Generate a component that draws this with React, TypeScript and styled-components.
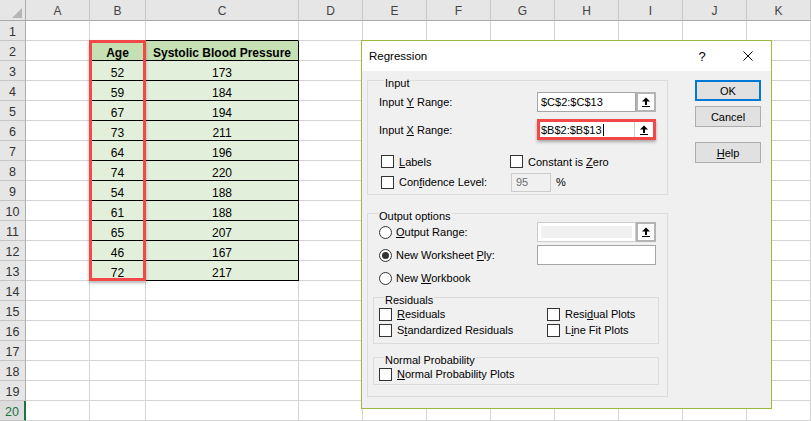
import React from 'react'
import styled, { createGlobalStyle } from 'styled-components'

const GlobalStyle = createGlobalStyle`
  html, body {
    margin: 0;
    padding: 0;
    background: #fff;
    overflow: hidden;
  }
`

const SHEET_FONT = `"Liberation Sans", Arial, sans-serif`
const UI_FONT = `"Liberation Sans", Arial, sans-serif`

/* ------------------------- SHEET ------------------------- */

const Sheet = styled.div`
  position: relative;
  width: 811px;
  height: 421px;
  overflow: hidden;
  display: grid;
  grid-template-columns: 26px 64px 56px 153px repeat(8, 64px);
  grid-template-rows: 21px repeat(20, 20px);
  font-family: ${SHEET_FONT};
`

const Corner = styled.div`
  box-sizing: border-box;
  background: #e6e6e6;
  border-right: 1px solid #ababab;
  border-bottom: 1px solid #ababab;
  display: flex;
  align-items: flex-end;
  justify-content: flex-end;
  padding: 0 3px 2px 0;
`

const ColHead = styled.div`
  box-sizing: border-box;
  background: #e6e6e6;
  border-right: 1px solid #c6c6c6;
  border-bottom: 1px solid #ababab;
  display: flex;
  align-items: center;
  justify-content: center;
  padding-top: 2px;
  font-size: 12px;
  color: #444;
`

const RowHead = styled.div<{ $active?: boolean }>`
  box-sizing: border-box;
  background: ${p => (p.$active ? '#dcdcdc' : '#e6e6e6')};
  border-right: ${p => (p.$active ? '2px solid #217346' : '1px solid #ababab')};
  border-bottom: 1px solid #c6c6c6;
  display: flex;
  align-items: center;
  justify-content: center;
  padding-top: 2px;
  font-size: 12.5px;
  color: ${p => (p.$active ? '#217346' : '#333')};
`

const Cell = styled.div<{ $fill?: string; $bold?: boolean; $rightLine?: string; $bottomLine?: string }>`
  box-sizing: border-box;
  display: flex;
  align-items: flex-end;
  justify-content: center;
  background: ${p => p.$fill ?? '#fff'};
  border-right: 1px solid ${p => p.$rightLine ?? '#d4d4d4'};
  border-bottom: 1px solid ${p => p.$bottomLine ?? '#d4d4d4'};
  font-weight: ${p => (p.$bold ? 700 : 400)};
  font-size: 12px;
  line-height: 14px;
  color: #000;
  white-space: nowrap;
  overflow: hidden;
`

const Highlight = styled.div`
  position: absolute;
  left: 89px;
  top: 40px;
  width: 57px;
  height: 241px;
  box-sizing: border-box;
  border: 3px solid #f24848;
  box-shadow: 0 2px 3px rgba(0, 0, 0, 0.3);
  pointer-events: none;
`

/* ------------------------- DIALOG ------------------------- */

const Dialog = styled.div`
  position: absolute;
  left: 361px;
  top: 40px;
  width: 411px;
  height: 369px;
  box-sizing: border-box;
  border: 1px solid #9cba3c;
  display: flex;
  flex-direction: column;
  font-family: ${UI_FONT};
  font-size: 11px;
  color: #000;
`

const TitleBar = styled.div`
  height: 30px;
  flex: none;
  background: #fff;
  display: flex;
  align-items: center;
  padding-left: 7px;
`

const Title = styled.div`
  flex: 1;
  font-size: 11.5px;
`

const Caption = styled.div`
  width: 46px;
  height: 30px;
  display: flex;
  align-items: center;
  justify-content: center;
  font-size: 13px;
`

const Body = styled.div`
  flex: 1;
  background: #f0f0f0;
  display: flex;
  gap: 27px;
  padding: 1px 10px 11px 5px;
`

const LeftCol = styled.div`
  width: 301px;
  display: flex;
  flex-direction: column;
`

const Group = styled.fieldset<{ $pad: string; $gap?: number }>`
  margin: ${p => (p.$gap ? `${p.$gap}px 0 0` : 0)};
  padding: ${p => p.$pad};
  border: 1px solid #dcdcdc;
  min-width: 0;
  box-sizing: border-box;
`

const Legend = styled.legend`
  padding: 5px 1px 0;
  margin-left: 5px;
  line-height: 12px;
  font-size: 11px;
`

const Row = styled.div<{ $h: number; $gap?: number; $indent?: number }>`
  height: ${p => p.$h}px;
  margin-top: ${p => p.$gap ?? 0}px;
  padding-left: ${p => p.$indent ?? 0}px;
  display: flex;
  align-items: center;
`

const FieldLabel = styled.div<{ $w: number }>`
  width: ${p => p.$w}px;
  flex: none;
  display: flex;
  align-items: center;
`

const TextBox = styled.div<{ $w: number; $disabled?: boolean }>`
  width: ${p => p.$w}px;
  height: 20px;
  box-sizing: border-box;
  border: 1px solid ${p => (p.$disabled ? '#cccccc' : '#a5a5a5')};
  background: ${p => (p.$disabled ? '#f0f0f0' : '#fff')};
  box-shadow: ${p => (p.$disabled ? 'inset 0 0 0 3px #fff' : 'none')};
  display: flex;
  align-items: center;
  padding-left: 3px;
  flex: none;
`

const PickButton = styled.div`
  width: 20px;
  height: 20px;
  box-sizing: border-box;
  border: 2px solid #b4b4b4;
  background: #fdfdfd;
  display: flex;
  align-items: center;
  justify-content: center;
  flex: none;
`

const RedFrame = styled.div`
  width: 119px;
  height: 21px;
  box-sizing: border-box;
  border: 3px solid #f24848;
  box-shadow: 0 2px 3px rgba(0, 0, 0, 0.3);
  background: #fff;
  display: flex;
  align-items: center;
  flex: none;
`

const FrameText = styled.div`
  flex: 1;
  display: flex;
  align-items: center;
  padding-left: 1px;
  height: 100%;
`

const Caret = styled.span`
  display: inline-block;
  width: 1px;
  height: 12px;
  background: #000;
  margin-left: 1px;
`

const FramePick = styled.div`
  width: 19px;
  height: 100%;
  box-sizing: border-box;
  border-left: 1px solid #d0d0d0;
  display: flex;
  align-items: center;
  justify-content: center;
`

const CheckGrid = styled.div<{ $col: number; $rows: string; $gap?: number }>`
  display: grid;
  grid-template-columns: ${p => p.$col}px 1fr;
  grid-template-rows: ${p => p.$rows};
  margin-top: ${p => p.$gap ?? 0}px;
`

const Option = styled.div<{ $indent?: number }>`
  display: flex;
  align-items: center;
  gap: 5px;
  padding-left: ${p => p.$indent ?? 0}px;
  white-space: nowrap;
`

const CheckBox = styled.span`
  width: 13px;
  height: 13px;
  box-sizing: border-box;
  border: 1px solid #333;
  background: #fff;
  flex: none;
`

const Radio = styled.span<{ $on?: boolean }>`
  width: 13px;
  height: 13px;
  box-sizing: border-box;
  border: 1px solid #333;
  border-radius: 50%;
  background: #fff;
  flex: none;
  display: flex;
  align-items: center;
  justify-content: center;

  &::after {
    content: '';
    width: 7px;
    height: 7px;
    border-radius: 50%;
    background: #333;
    display: ${p => (p.$on ? 'block' : 'none')};
  }
`

const RadioOption = styled.div`
  display: flex;
  align-items: center;
  gap: 4px;
  white-space: nowrap;
`

const Spin = styled.div`
  width: 40px;
  height: 19px;
  box-sizing: border-box;
  margin-left: 1px;
  border: 1px solid #cccccc;
  background: #f0f0f0;
  color: #6d6d6d;
  display: flex;
  align-items: center;
  padding-left: 4px;
`

const Percent = styled.span`
  margin-left: 5px;
`

const SpinRow = styled.div`
  display: flex;
  align-items: center;
`

const Key = styled.span`
  text-decoration: underline;
  text-underline-offset: 1px;
`

const RightCol = styled.div`
  width: 66px;
  display: flex;
  flex-direction: column;
  padding-top: 8px;
`

const Button = styled.div<{ $primary?: boolean; $gap?: number }>`
  height: 21px;
  margin-top: ${p => p.$gap ?? 0}px;
  box-sizing: border-box;
  background: #e1e1e1;
  border: ${p => (p.$primary ? '2px solid #0078d7' : '1px solid #adadad')};
  display: flex;
  align-items: center;
  justify-content: center;
  font-size: 11px;
`

/* ------------------------- ICONS ------------------------- */

const UpIcon = () => (
  <svg width="8" height="10" viewBox="0 0 8 10">
    <polygon points="0,4.5 4,0.5 8,4.5" fill="#000" />
    <rect x="3" y="4" width="2" height="4" fill="#000" />
    <rect x="0" y="9" width="8" height="1" fill="#000" />
  </svg>
)

const CloseIcon = () => (
  <svg width="10" height="10" viewBox="0 0 10 10">
    <path d="M0.5 0.5 L9.5 9.5 M9.5 0.5 L0.5 9.5" stroke="#000" strokeWidth="1" fill="none" />
  </svg>
)

const CornerMark = () => (
  <svg width="10" height="10" viewBox="0 0 10 10">
    <polygon points="10,0 10,10 0,10" fill="#b5b5b5" />
  </svg>
)

/* ------------------------- DATA ------------------------- */

const LETTERS = ['A', 'B', 'C', 'D', 'E', 'F', 'G', 'H', 'I', 'J', 'K']
const AGES = [52, 59, 67, 73, 64, 74, 54, 61, 65, 46, 72]
const PRESSURE = [173, 184, 194, 211, 196, 220, 188, 188, 207, 167, 217]

const HEAD_FILL = '#c6e0b4'
const BODY_FILL = '#e2efda'
const EDGE = '#000'

const cellFor = (row: number, col: number) => {
  const inTable = row >= 2 && row <= 13
  const tableCol = col === 2 || col === 3
  let text: string | number = ''
  if (inTable && tableCol) {
    if (row === 2) text = col === 2 ? 'Age' : 'Systolic Blood Pressure'
    else text = col === 2 ? AGES[row - 3] : PRESSURE[row - 3]
  }
  return (
    <Cell
      key={`${row}-${col}`}
      $fill={inTable && tableCol ? (row === 2 ? HEAD_FILL : BODY_FILL) : undefined}
      $bold={row === 2}
      $rightLine={inTable && col <= 3 ? EDGE : undefined}
      $bottomLine={row >= 1 && row <= 13 && tableCol ? EDGE : undefined}
    >
      {text}
    </Cell>
  )
}

const RegressionDialog = () => (
  <Dialog>
    <TitleBar>
      <Title>Regression</Title>
      <Caption>?</Caption>
      <Caption>
        <CloseIcon />
      </Caption>
    </TitleBar>
    <Body>
      <LeftCol>
        <Group $pad="3px 11px 2px 11px">
          <Legend>Input</Legend>
          <Row $h={20}>
            <FieldLabel $w={158}>
              Input&nbsp;<Key>Y</Key>&nbsp;Range:
            </FieldLabel>
            <TextBox $w={99}>$C$2:$C$13</TextBox>
            <PickButton>
              <UpIcon />
            </PickButton>
          </Row>
          <Row $h={21} $gap={7}>
            <FieldLabel $w={158}>
              Input&nbsp;<Key>X</Key>&nbsp;Range:
            </FieldLabel>
            <RedFrame>
              <FrameText>
                $B$2:$B$13
                <Caret />
              </FrameText>
              <FramePick>
                <UpIcon />
              </FramePick>
            </RedFrame>
          </Row>
          <CheckGrid $col={131} $rows="21px 20px" $gap={11}>
            <Option $indent={2}>
              <CheckBox />
              <span>
                <Key>L</Key>abels
              </span>
            </Option>
            <Option>
              <CheckBox />
              <span>
                Constant is <Key>Z</Key>ero
              </span>
            </Option>
            <Option $indent={2}>
              <CheckBox />
              <span>
                Con<Key>f</Key>idence Level:
              </span>
            </Option>
            <SpinRow>
              <Spin>95</Spin>
              <Percent>%</Percent>
            </SpinRow>
          </CheckGrid>
        </Group>

        <Group $pad="0 8px 11px 5px" $gap={10}>
          <Legend>Output options</Legend>
          <Row $h={20} $indent={6}>
            <FieldLabel $w={158}>
              <RadioOption>
                <Radio />
                <span>
                  <Key>O</Key>utput Range:
                </span>
              </RadioOption>
            </FieldLabel>
            <TextBox $w={99} $disabled />
            <PickButton>
              <UpIcon />
            </PickButton>
          </Row>
          <Row $h={20} $gap={3} $indent={6}>
            <FieldLabel $w={158}>
              <RadioOption>
                <Radio $on />
                <span>
                  New Worksheet <Key>P</Key>ly:
                </span>
              </RadioOption>
            </FieldLabel>
            <TextBox $w={119} />
          </Row>
          <Row $h={20} $gap={3} $indent={6}>
            <RadioOption>
              <Radio />
              <span>
                New <Key>W</Key>orkbook
              </span>
            </RadioOption>
          </Row>

          <Group $pad="0 5px 5px 5px" $gap={1}>
            <Legend>Residuals</Legend>
            <CheckGrid $col={168} $rows="16px 16px">
              <Option>
                <CheckBox />
                <span>
                  <Key>R</Key>esiduals
                </span>
              </Option>
              <Option>
                <CheckBox />
                <span>
                  Resi<Key>d</Key>ual Plots
                </span>
              </Option>
              <Option>
                <CheckBox />
                <span>
                  S<Key>t</Key>andardized Residuals
                </span>
              </Option>
              <Option>
                <CheckBox />
                <span>
                  L<Key>i</Key>ne Fit Plots
                </span>
              </Option>
            </CheckGrid>
          </Group>

          <Group $pad="0 5px 2px 5px" $gap={5}>
            <Legend>Normal Probability</Legend>
            <CheckGrid $col={168} $rows="16px">
              <Option>
                <CheckBox />
                <span>
                  <Key>N</Key>ormal Probability Plots
                </span>
              </Option>
            </CheckGrid>
          </Group>
        </Group>
      </LeftCol>

      <RightCol>
        <Button $primary>OK</Button>
        <Button $gap={5}>Cancel</Button>
        <Button $gap={15}>
          <span>
            <Key>H</Key>elp
          </span>
        </Button>
      </RightCol>
    </Body>
  </Dialog>
)

const App = () => {
  const rows = Array.from({ length: 20 }, (_, i) => i + 1)
  return (
    <>
      <GlobalStyle />
      <Sheet>
        <Corner>
          <CornerMark />
        </Corner>
        {LETTERS.map(l => (
          <ColHead key={l}>{l}</ColHead>
        ))}
        {rows.map(r => (
          <React.Fragment key={r}>
            <RowHead $active={r === 20}>{r}</RowHead>
            {LETTERS.map((_, c) => cellFor(r, c + 1))}
          </React.Fragment>
        ))}
        <Highlight />
        <RegressionDialog />
      </Sheet>
    </>
  )
}

export default App
